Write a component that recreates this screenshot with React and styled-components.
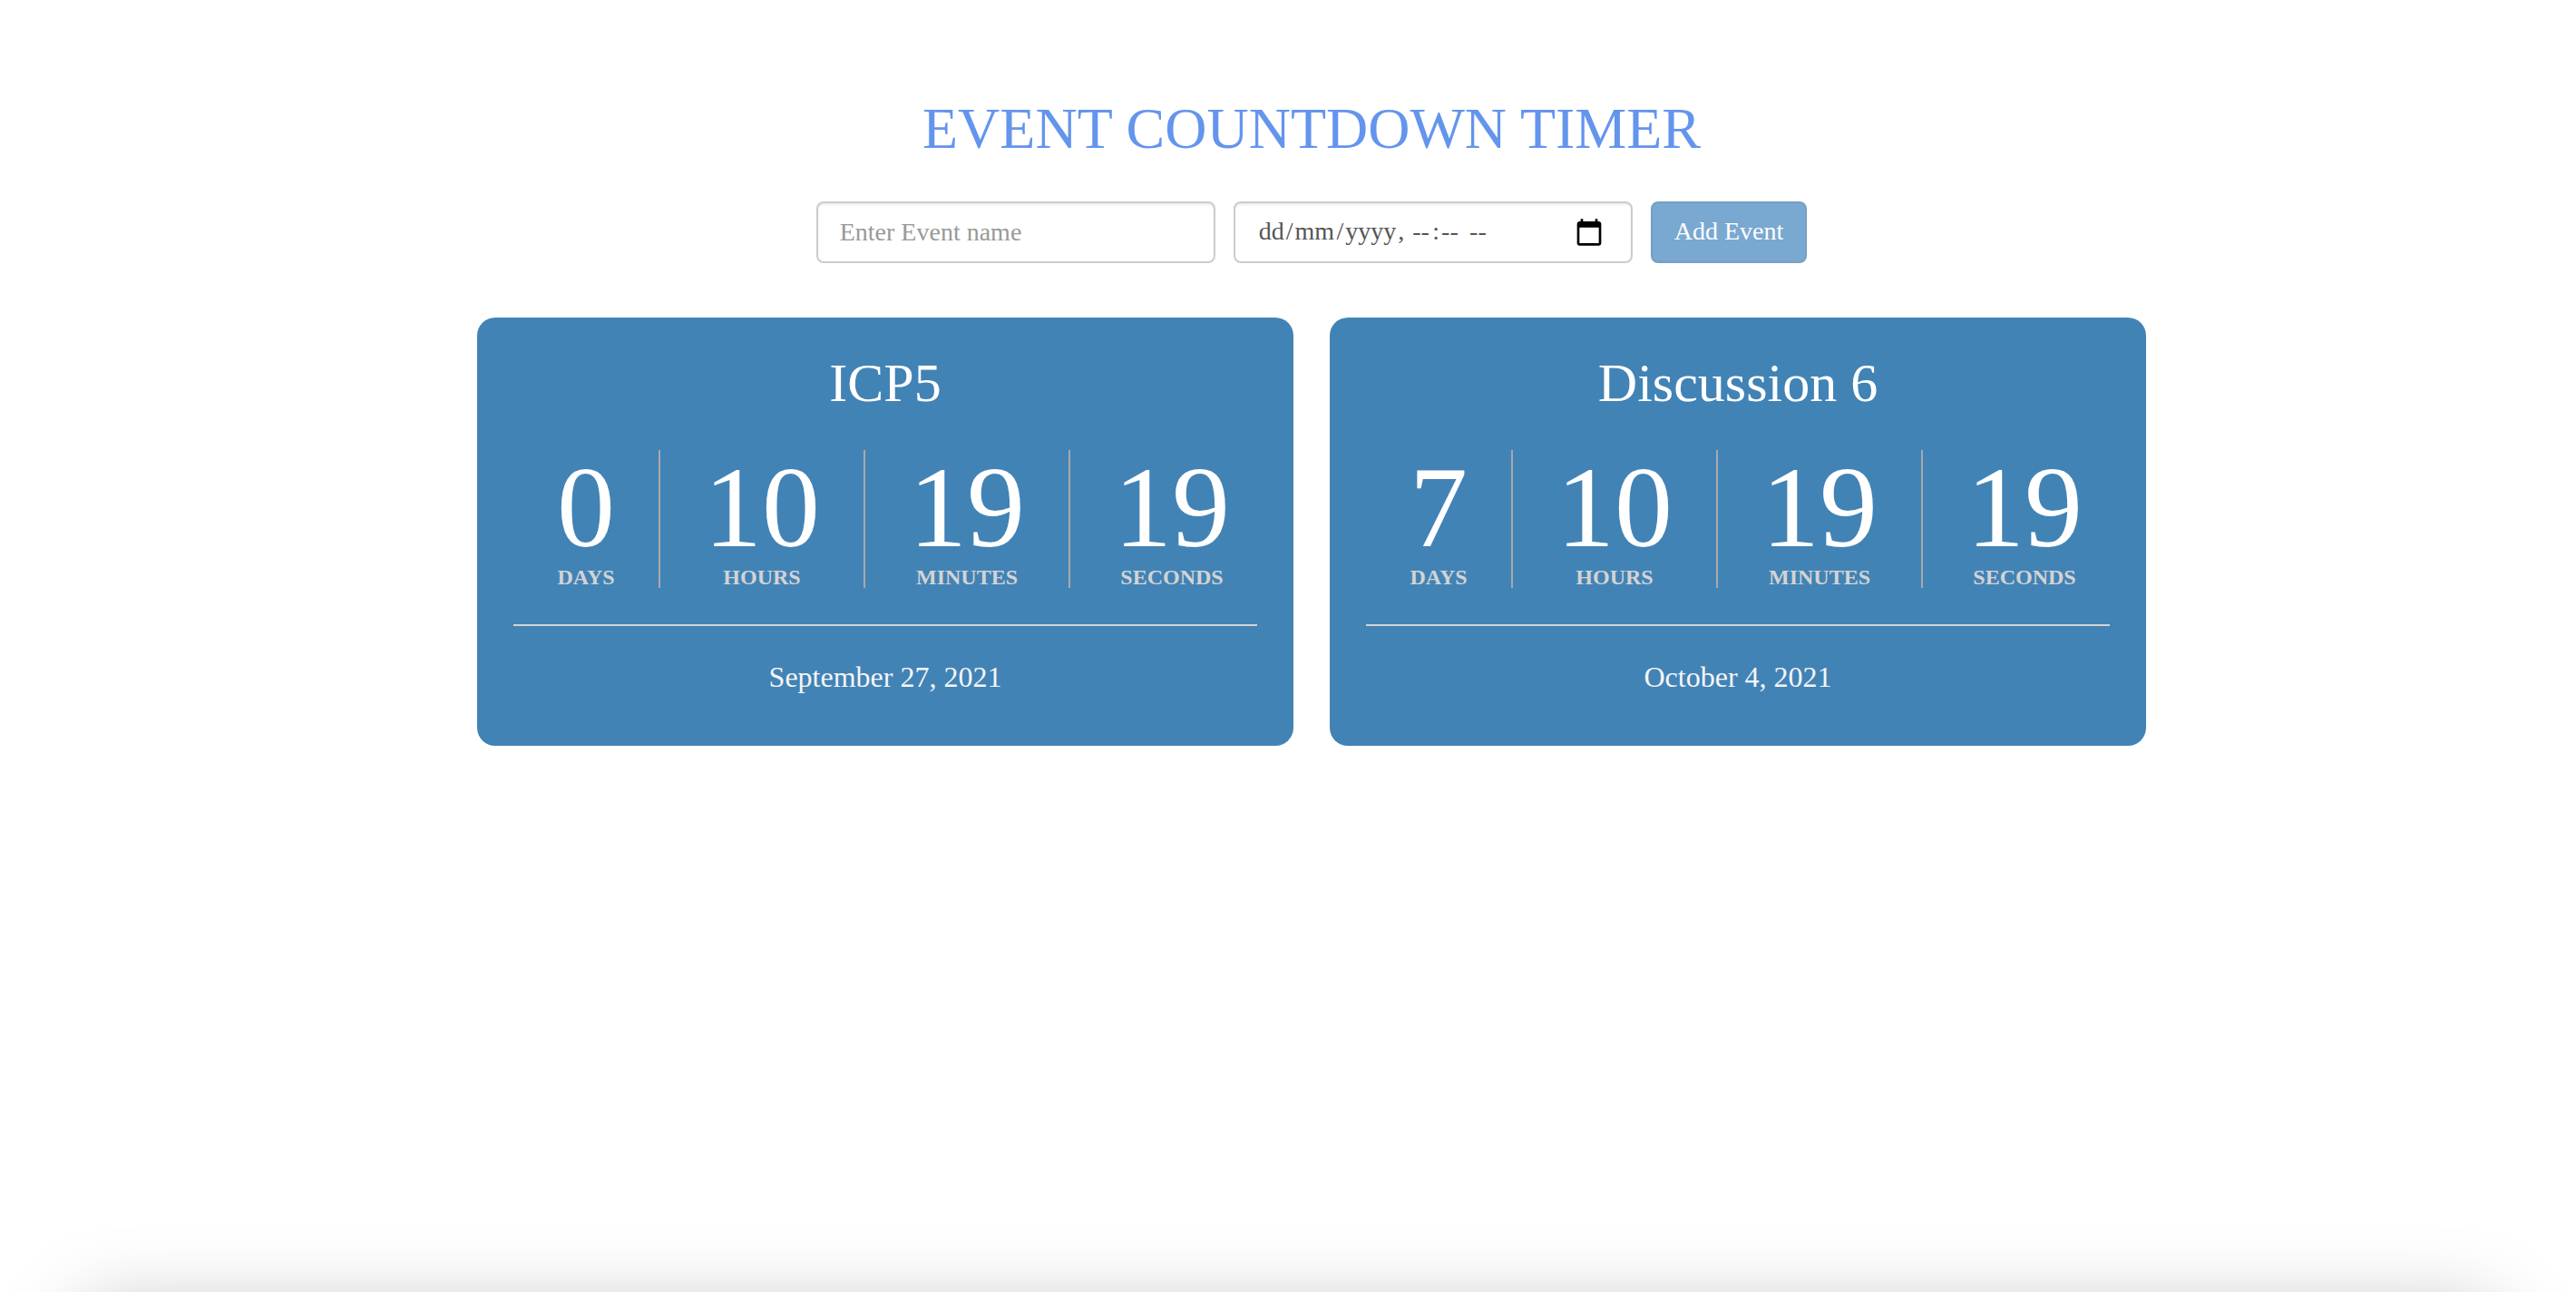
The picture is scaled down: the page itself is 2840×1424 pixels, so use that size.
import React, { useState } from "react";
import styled, { createGlobalStyle, css } from "styled-components";

const GlobalStyle = createGlobalStyle`
  *, *::before, *::after { box-sizing: border-box; }
  body {
    margin: 0;
    background: #fff;
    font-family: "Liberation Serif", "Times New Roman", serif;
  }
`;

const Page = styled.main`
  display: flex;
  flex-direction: column;
  align-items: center;
  min-height: 100vh;
  padding: 110px 0 110px 52px;
`;

const PageTitle = styled.h1`
  margin: 0 0 48px;
  font-size: 64px;
  font-weight: 400;
  line-height: 64px;
  color: cornflowerblue;
`;

const EventForm = styled.form`
  display: flex;
  flex-wrap: wrap;
  justify-content: center;
  gap: 20px;
  margin-bottom: 60px;
`;

const fieldBox = css`
  width: 440px;
  height: 68px;
  padding: 0 24px;
  border: 2px solid #ccc;
  border-radius: 8px;
  background: #fff;
  box-shadow: inset 0 2px 2px rgba(0, 0, 0, 0.075);
  font-family: inherit;
  font-size: 28px;
  line-height: 40px;
  color: #555;
`;

const NameField = styled.input`
  ${fieldBox}

  &::placeholder {
    color: #999;
  }
`;

const DateTimeField = styled.div`
  ${fieldBox}
  display: flex;
  align-items: center;
  justify-content: space-between;
`;

const DateParts = styled.div`
  display: flex;
  align-items: center;
  padding-bottom: 2px;
  white-space: pre;
`;

const DatePart = styled.input`
  width: ${({ $width }) => $width}px;
  height: 40px;
  padding: 0 2px;
  border: 0;
  background: none;
  font: inherit;
  color: inherit;
  outline-offset: 0;

  &::placeholder {
    color: inherit;
    opacity: 1;
  }
`;

const PickerButton = styled.button`
  display: flex;
  margin-right: 6px;
  padding: 0;
  border: 0;
  background: none;
  color: #000;
  cursor: pointer;
`;

const AddButton = styled.button`
  height: 68px;
  padding: 0 24px 2px;
  border: 2px solid #2e6da4;
  border-radius: 8px;
  background: #337ab7;
  font-family: inherit;
  font-size: 28px;
  line-height: 40px;
  color: #fff;
  cursor: pointer;

  &:disabled {
    opacity: 0.65;
    cursor: not-allowed;
  }
`;

const CardGrid = styled.section`
  display: grid;
  grid-template-columns: repeat(2, minmax(0, 1fr));
  gap: 40px;
  width: 100%;
  max-width: 1840px;
`;

const Card = styled.article`
  padding: 40px;
  border-radius: 20px;
  background: #4283b6;
  text-align: center;
`;

const EventName = styled.h2`
  margin: 0 0 42px;
  font-size: 60px;
  font-weight: 400;
  line-height: 64px;
  color: #fff;
`;

const Countdown = styled.div`
  display: flex;
  padding-bottom: 40px;
`;

const Unit = styled.div`
  flex: none;
  padding: 0 48px;
  border-right: 2px solid darkgray;

  &:last-child {
    border-right: none;
  }
`;

const Amount = styled.div`
  margin-bottom: 2px;
  font-size: 128px;
  line-height: 126px;
  color: #fff;
`;

const UnitLabel = styled.div`
  font-size: 24px;
  font-weight: 700;
  line-height: 24px;
  text-transform: uppercase;
  color: lightgray;
`;

const EventDate = styled.p`
  margin: 0 0 20px;
  padding-top: 40px;
  border-top: 2px solid lightgray;
  font-size: 32px;
  line-height: 32px;
  color: whitesmoke;
`;

const BottomShade = styled.div`
  position: fixed;
  top: calc(100% + 20px);
  left: 88px;
  right: 88px;
  height: 200px;
  box-shadow: 0 0 88px rgba(0, 0, 0, 0.26);
  pointer-events: none;
`;

const EVENTS = [
  { name: "ICP5", date: "September 27, 2021", left: { Days: 0, Hours: 10, Minutes: 19, Seconds: 19 } },
  { name: "Discussion 6", date: "October 4, 2021", left: { Days: 7, Hours: 10, Minutes: 19, Seconds: 19 } },
];

// Each part is followed by the separator that stands after it.
const DATE_PARTS = [
  { key: "day", label: "Day", hint: "dd", width: 32, length: 2, after: "/" },
  { key: "month", label: "Month", hint: "mm", width: 48, length: 2, after: "/" },
  { key: "year", label: "Year", hint: "yyyy", width: 60, length: 4, after: ", " },
  { key: "hour", label: "Hour", hint: "--", width: 24, length: 2, after: ":" },
  { key: "minute", label: "Minute", hint: "--", width: 24, length: 2, after: " " },
  { key: "period", label: "AM or PM", hint: "--", width: 24, length: 2, after: "" },
];

function CalendarIcon() {
  return (
    <svg width="32" height="32" viewBox="0 0 24 24" fill="currentColor" aria-hidden="true">
      <path d="M20 3h-1V1h-2v2H7V1H5v2H4c-1.1 0-2 .9-2 2v16c0 1.1.9 2 2 2h16c1.1 0 2-.9 2-2V5c0-1.1-.9-2-2-2zm0 18H4V8h16v13z" />
    </svg>
  );
}

function EventDateTime({ value, onChange }) {
  return (
    <DateTimeField role="group" aria-label="Event date and time">
      <DateParts>
        {DATE_PARTS.map((part) => (
          <React.Fragment key={part.key}>
            <DatePart
              type="text"
              aria-label={part.label}
              placeholder={part.hint}
              maxLength={part.length}
              $width={part.width}
              value={value[part.key] || ""}
              onChange={(e) => onChange({ ...value, [part.key]: e.target.value })}
            />
            {part.after && <span>{part.after}</span>}
          </React.Fragment>
        ))}
      </DateParts>
      <PickerButton type="button" aria-label="Show date picker">
        <CalendarIcon />
      </PickerButton>
    </DateTimeField>
  );
}

function EventCard({ event }) {
  return (
    <Card>
      <EventName>{event.name}</EventName>
      <Countdown>
        {Object.entries(event.left).map(([unit, amount]) => (
          <Unit key={unit}>
            <Amount>{amount}</Amount>
            <UnitLabel>{unit}</UnitLabel>
          </Unit>
        ))}
      </Countdown>
      <EventDate>{event.date}</EventDate>
    </Card>
  );
}

export default function App() {
  const [name, setName] = useState("");
  const [when, setWhen] = useState({});
  const complete = name && DATE_PARTS.every((part) => when[part.key]);

  return (
    <>
      <GlobalStyle />
      <Page>
        <PageTitle>EVENT COUNTDOWN TIMER</PageTitle>
        <EventForm onSubmit={(e) => e.preventDefault()}>
          <NameField
            type="text"
            aria-label="Event name"
            placeholder="Enter Event name"
            value={name}
            onChange={(e) => setName(e.target.value)}
          />
          <EventDateTime value={when} onChange={setWhen} />
          <AddButton type="submit" disabled={!complete}>
            Add Event
          </AddButton>
        </EventForm>
        <CardGrid>
          {EVENTS.map((event) => (
            <EventCard key={event.name} event={event} />
          ))}
        </CardGrid>
      </Page>
      <BottomShade />
    </>
  );
}
